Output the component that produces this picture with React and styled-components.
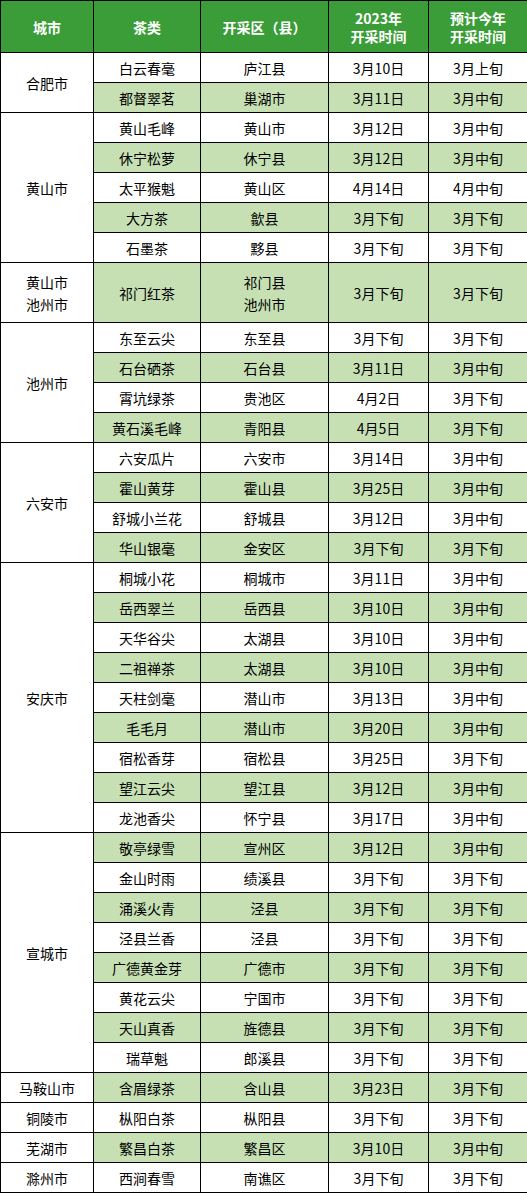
import React from 'react'
import styled, { createGlobalStyle } from 'styled-components'

const GlobalStyle = createGlobalStyle`
  html, body {
    margin: 0;
    padding: 0;
    background: #fff;
  }
  body {
    font-family: "Noto Sans CJK SC", "Liberation Sans", sans-serif;
  }
`;

const Table = styled.table`
  width: 527px;
  table-layout: fixed;
  border-collapse: collapse;
  font-size: 14px;
  color: #000;
`;

const Col = styled.col`
  width: ${p => p.$w}px;
`;

const HeadCell = styled.th`
  height: 51px;
  padding: 0;
  background: #3a9d37;
  color: #fff;
  font-weight: bold;
  line-height: 18px;
  text-align: center;
  border: 1px solid #000;
`;

const Cell = styled.td`
  height: ${p => (p.$tall ? 59 : 29)}px;
  padding: 0;
  text-align: center;
  vertical-align: middle;
  line-height: ${p => (p.$tall ? 22 : 20)}px;
  border: 1px solid #000;
  background: ${p => (p.$green ? '#c6e0b4' : '#fff')};
  white-space: nowrap;
`;

const CityCell = styled(Cell)`
  background: #fff;
`;

const widths = [93, 107, 128, 100, 99]

// 城市 -> [茶类, 开采区, 2023年, 预计今年]
const groups = [
  { city: ['合肥市'], rows: [
    ['白云春毫', '庐江县', '3月10日', '3月上旬'],
    ['都督翠茗', '巢湖市', '3月11日', '3月中旬'],
  ]},
  { city: ['黄山市'], rows: [
    ['黄山毛峰', '黄山市', '3月12日', '3月中旬'],
    ['休宁松萝', '休宁县', '3月12日', '3月中旬'],
    ['太平猴魁', '黄山区', '4月14日', '4月中旬'],
    ['大方茶', '歙县', '3月下旬', '3月下旬'],
    ['石墨茶', '黟县', '3月下旬', '3月下旬'],
  ]},
  { city: ['黄山市', '池州市'], tall: true, rows: [
    ['祁门红茶', ['祁门县', '池州市'], '3月下旬', '3月下旬'],
  ]},
  { city: ['池州市'], rows: [
    ['东至云尖', '东至县', '3月下旬', '3月下旬'],
    ['石台硒茶', '石台县', '3月11日', '3月中旬'],
    ['霄坑绿茶', '贵池区', '4月2日', '3月下旬'],
    ['黄石溪毛峰', '青阳县', '4月5日', '3月下旬'],
  ]},
  { city: ['六安市'], rows: [
    ['六安瓜片', '六安市', '3月14日', '3月中旬'],
    ['霍山黄芽', '霍山县', '3月25日', '3月中旬'],
    ['舒城小兰花', '舒城县', '3月12日', '3月中旬'],
    ['华山银毫', '金安区', '3月下旬', '3月下旬'],
  ]},
  { city: ['安庆市'], rows: [
    ['桐城小花', '桐城市', '3月11日', '3月中旬'],
    ['岳西翠兰', '岳西县', '3月10日', '3月中旬'],
    ['天华谷尖', '太湖县', '3月10日', '3月中旬'],
    ['二祖禅茶', '太湖县', '3月10日', '3月中旬'],
    ['天柱剑毫', '潜山市', '3月13日', '3月中旬'],
    ['毛毛月', '潜山市', '3月20日', '3月中旬'],
    ['宿松香芽', '宿松县', '3月25日', '3月下旬'],
    ['望江云尖', '望江县', '3月12日', '3月中旬'],
    ['龙池香尖', '怀宁县', '3月17日', '3月中旬'],
  ]},
  { city: ['宣城市'], rows: [
    ['敬亭绿雪', '宣州区', '3月12日', '3月中旬'],
    ['金山时雨', '绩溪县', '3月下旬', '3月下旬'],
    ['涌溪火青', '泾县', '3月下旬', '3月下旬'],
    ['泾县兰香', '泾县', '3月下旬', '3月下旬'],
    ['广德黄金芽', '广德市', '3月下旬', '3月下旬'],
    ['黄花云尖', '宁国市', '3月下旬', '3月下旬'],
    ['天山真香', '旌德县', '3月下旬', '3月下旬'],
    ['瑞草魁', '郎溪县', '3月下旬', '3月下旬'],
  ]},
  { city: ['马鞍山市'], rows: [['含眉绿茶', '含山县', '3月23日', '3月下旬']] },
  { city: ['铜陵市'], rows: [['枞阳白茶', '枞阳县', '3月下旬', '3月下旬']] },
  { city: ['芜湖市'], rows: [['繁昌白茶', '繁昌区', '3月10日', '3月中旬']] },
  { city: ['滁州市'], rows: [['西涧春雪', '南谯区', '3月下旬', '3月下旬']] },
]

const lines = v => (Array.isArray(v) ? v.map((s, i) => <div key={i}>{s}</div>) : v)

const App = () => {
  // 行号，用来交替绿色底
  let n = 0
  return (
    <>
      <GlobalStyle />
      <Table>
        <colgroup>
          {widths.map((w, i) => <Col key={i} $w={w} />)}
        </colgroup>
        <thead>
          <tr>
            <HeadCell>城市</HeadCell>
            <HeadCell>茶类</HeadCell>
            <HeadCell>开采区（县）</HeadCell>
            <HeadCell>2023年<br />开采时间</HeadCell>
            <HeadCell>预计今年<br />开采时间</HeadCell>
          </tr>
        </thead>
        <tbody>
          {groups.map((g, gi) =>
            g.rows.map((r, ri) => {
              n += 1
              const green = n % 2 === 0
              return (
                <tr key={`${gi}-${ri}`}>
                  {ri === 0 && (
                    <CityCell rowSpan={g.rows.length} $tall={g.tall}>
                      {lines(g.city)}
                    </CityCell>
                  )}
                  {r.map((v, ci) => (
                    <Cell key={ci} $green={green} $tall={g.tall}>
                      {lines(v)}
                    </Cell>
                  ))}
                </tr>
              )
            })
          )}
        </tbody>
      </Table>
    </>
  )
}

export default App
